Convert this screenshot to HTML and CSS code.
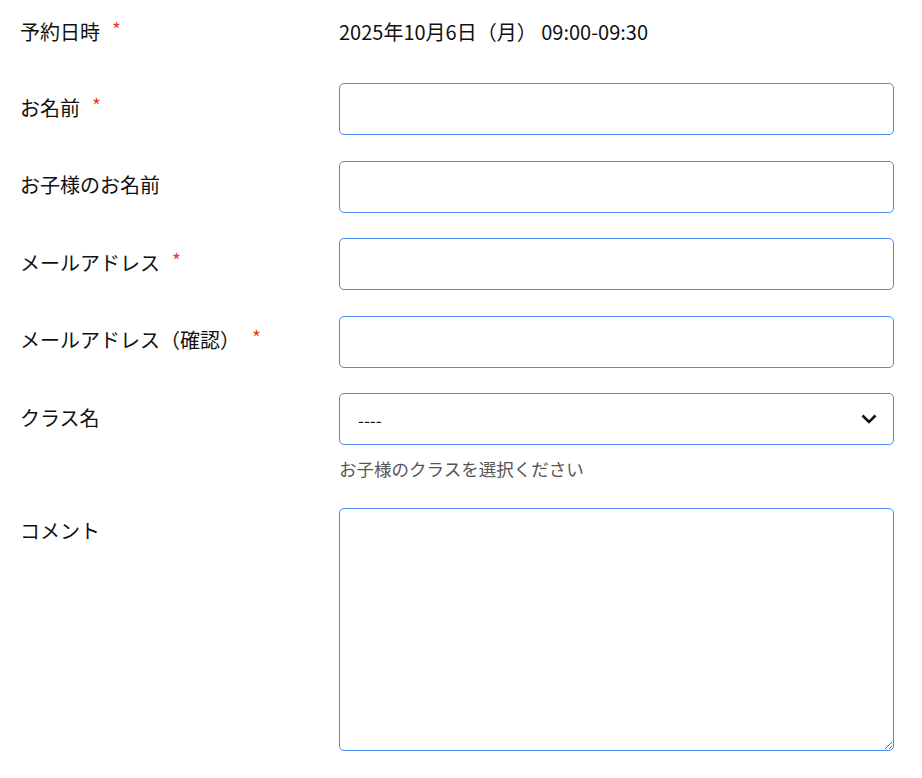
FILE: index.html
```html
<!DOCTYPE html>
<html lang="ja">
<head>
  <meta charset="UTF-8" />
  <meta name="viewport" content="width=device-width, initial-scale=1" />
  <title>予約フォーム</title>
  <link rel="stylesheet" href="styles.css">
</head>
<body>
  <form class="reserve-form">
    <div class="row row-date">
      <div class="label">予約日時<span class="req">*</span></div>
      <div class="field"><div class="date-text">2025年10月6日（月） 09:00-09:30</div></div>
    </div>
    <div class="row">
      <label class="label" for="name">お名前<span class="req">*</span></label>
      <div class="field"><input type="text" id="name" class="input" /></div>
    </div>
    <div class="row">
      <label class="label" for="childName">お子様のお名前</label>
      <div class="field"><input type="text" id="childName" class="input" /></div>
    </div>
    <div class="row">
      <label class="label" for="email">メールアドレス<span class="req">*</span></label>
      <div class="field"><input type="email" id="email" class="input" /></div>
    </div>
    <div class="row">
      <label class="label" for="emailConfirm">メールアドレス（確認）<span class="req">*</span></label>
      <div class="field"><input type="email" id="emailConfirm" class="input" /></div>
    </div>
    <div class="row">
      <label class="label" for="className">クラス名</label>
      <div class="field">
        <div class="select-wrap">
          <select id="className" class="input select">
            <option>----</option>
          </select>
          <svg class="chevron" width="16" height="10" viewBox="0 0 16 10"><path d="M1.5 1.5 L8 8 L14.5 1.5" fill="none" stroke="#111" stroke-width="2.6"/></svg>
        </div>
        <p class="help">お子様のクラスを選択ください</p>
      </div>
    </div>
    <div class="row">
      <label class="label" for="comment">コメント</label>
      <div class="field"><textarea id="comment" class="input textarea"></textarea></div>
    </div>
  </form>
</body>
</html>
```

FILE: styles.css
```css
body {
  margin: 0;
  background: #fff;
  color: #111;
  font-family: "Noto Sans CJK JP", "Noto Sans", sans-serif;
  font-size: 20px;
}
.reserve-form {
  padding: 7px 0 0 20px;
}
.row {
  display: grid;
  grid-template-columns: 319px 555px;
  margin-bottom: 25.5px;
}
.row-date {
  margin-bottom: 24px;
}
.label {
  display: block;
  padding-top: 9.5px;
  line-height: 29px;
}
.req {
  color: #e53f27;
  font-size: 19px;
  margin-left: 12px;
  vertical-align: top;
  line-height: 24px;
}
.date-text {
  padding-top: 9.5px;
  line-height: 29px;
  height: 42.5px;
}
.input {
  display: block;
  box-sizing: border-box;
  width: 100%;
  height: 52px;
  margin: 0;
  padding: 0 18px;
  border: 1px solid #4a89f3;
  border-radius: 5px;
  background: #fff;
  font-family: inherit;
  font-size: 17px;
  color: #111;
  outline: none;
}
.select-wrap {
  position: relative;
}
.select {
  appearance: none;
  -webkit-appearance: none;
}
.chevron {
  position: absolute;
  right: 17px;
  top: 21px;
  pointer-events: none;
}
.help {
  margin: 11px 0 0;
  font-size: 17.5px;
  line-height: 25px;
  color: #555;
}
.textarea {
  height: 243px;
  margin-top: 1px;
  padding: 12px 16px;
  resize: vertical;
}
```
